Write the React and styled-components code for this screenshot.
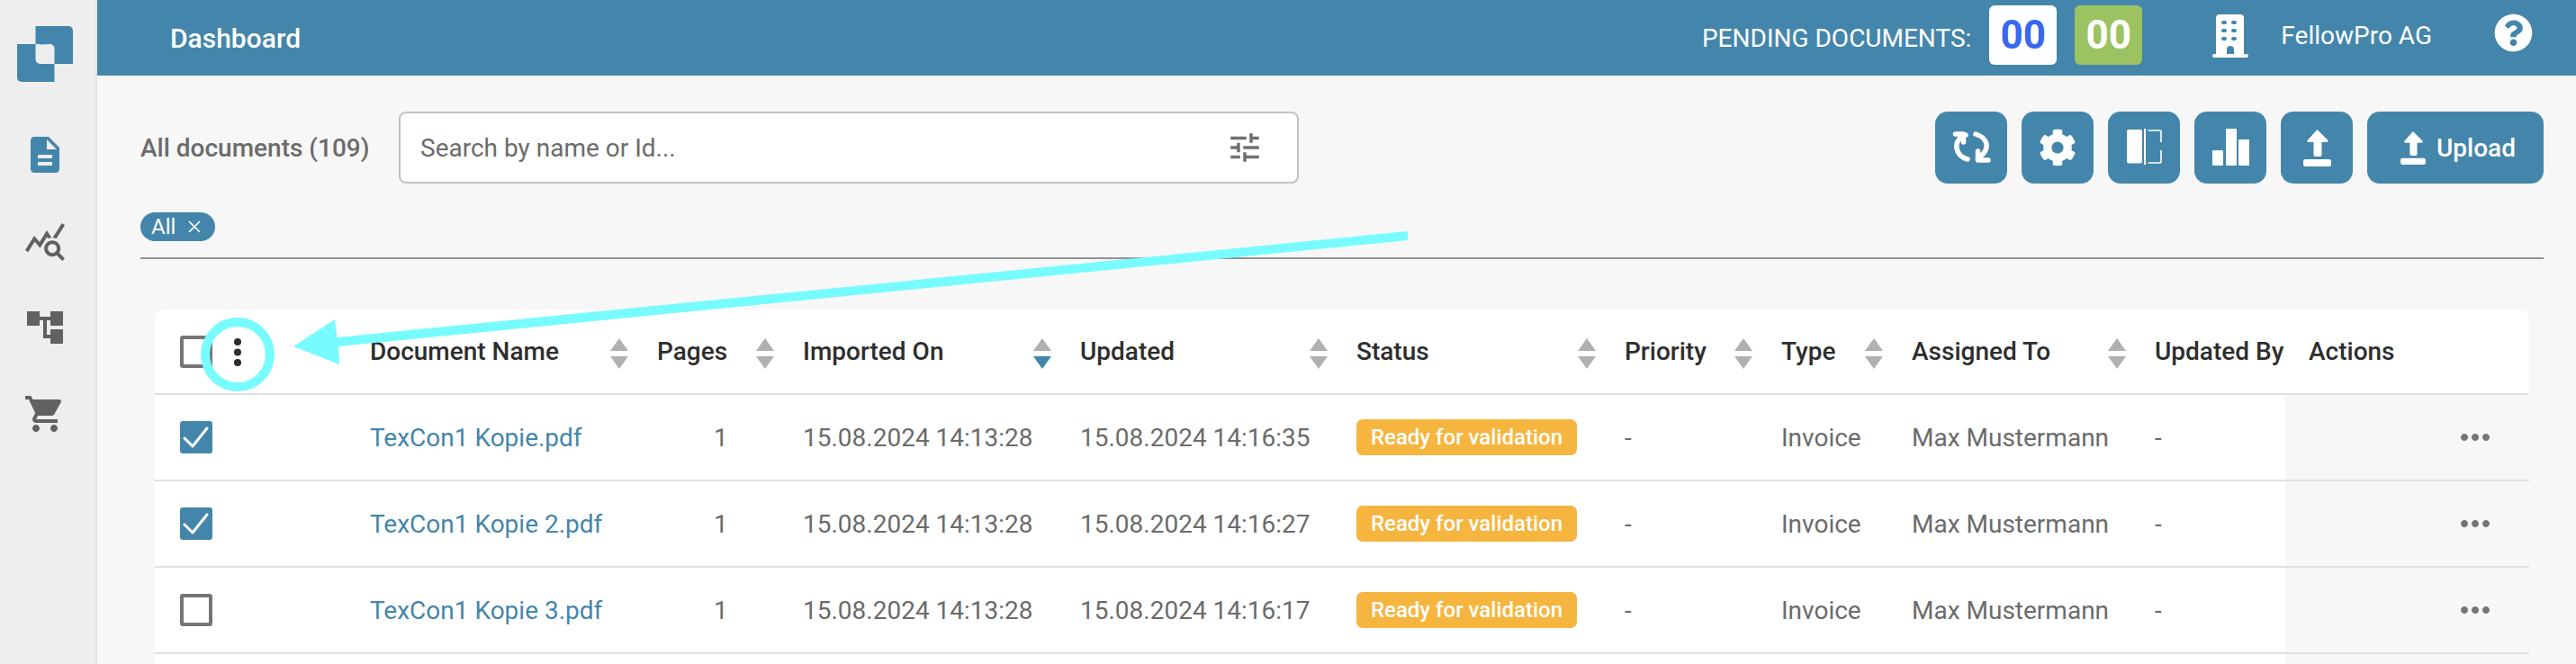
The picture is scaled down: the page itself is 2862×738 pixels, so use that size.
import styled, { createGlobalStyle } from 'styled-components';
import { FaCog, FaQuestionCircle } from 'react-icons/fa';
import { MdAccountTree, MdDescription, MdMoreHoriz, MdQueryStats, MdShoppingCart, MdTune } from 'react-icons/md';

const BLUE = '#4486ab';

const GlobalStyle = createGlobalStyle`
    html, body {
        margin: 0;
        height: 738px;
        overflow: hidden;
        background: #f7f7f7;
        font-family: Roboto, "Liberation Sans", sans-serif;
    }
    * {
        box-sizing: border-box;
    }
`;

const Page = styled.div`
    position: relative;
    display: flex;
    width: 2862px;
    height: 738px;
    overflow: hidden;
`;

const Sidebar = styled.aside`
    display: flex;
    flex-direction: column;
    align-items: center;
    flex: 0 0 108px;
    padding: 29px 6px 0 0;
    background: #eeeeee;
    border-right: 2px solid #e2e2e2;
`;

const SideNav = styled.nav`
    display: flex;
    flex-direction: column;
    gap: 48px;
    margin-top: 57px;
`;

const SideItem = styled.div`
    display: flex;
    width: 48px;
    height: 48px;
    font-size: ${(p) => p.$size || 48}px;
    align-items: center;
    justify-content: center;
    color: ${(p) => (p.$active ? BLUE : '#616161')};
`;

const Main = styled.main`
    flex: 1;
    min-width: 0;
    display: flex;
    flex-direction: column;
`;

const Header = styled.header`
    display: flex;
    flex: 0 0 84px;
    align-items: center;
    padding: 0 48px 0 81px;
    background: ${BLUE};
    color: #ffffff;
`;

const HeaderTitle = styled.div`
    font-size: 30px;
    font-weight: 500;
    margin-right: auto;
`;

const PendingLabel = styled.span`
    font-size: 28px;
    margin-right: 20px;
`;

const CountBox = styled.div`
    display: flex;
    width: 75px;
    height: 66px;
    margin-right: 20px;
    margin-top: -6px;
    align-items: center;
    justify-content: center;
    border-radius: 6px;
    font-size: 44px;
    font-weight: 700;
    background: ${(p) => p.$bg};
    color: ${(p) => p.$color};
`;

const Company = styled.span`
    font-size: 28px;
    margin: -6px 69px 0 36px;
`;

const BuildingIcon = styled.svg`
    margin-left: 58px;
    width: 40px;
    height: 48px;
    margin-top: -4px;
`;

const HelpIcon = styled(FaQuestionCircle)`
    font-size: 43px;
    margin-top: -12px;
`;

const Content = styled.div`
    display: flex;
    flex-direction: column;
    padding: 40px 36px 0 48px;
`;

const Toolbar = styled.div`
    display: flex;
    align-items: center;
`;

const DocCount = styled.div`
    width: 287px;
    font-size: 28px;
    font-weight: 500;
    color: #6b6b6b;
`;

const SearchBox = styled.div`
    display: flex;
    width: 1000px;
    height: 80px;
    padding: 0 37px 0 22px;
    align-items: center;
    justify-content: space-between;
    background: #ffffff;
    border: 2px solid #c2c2c2;
    border-radius: 8px;
    font-size: 28px;
    color: #6b6b6b;
`;

const TuneIcon = styled(MdTune)`
    font-size: 42px;
    color: #6f6f6f;
`;

const Actions = styled.div`
    display: flex;
    gap: 16px;
    margin-left: auto;
`;

const ActionButton = styled.button`
    display: flex;
    height: 80px;
    width: ${(p) => (p.$wide ? '196px' : '80px')};
    padding: ${(p) => (p.$wide ? '0 0 0 37px' : '0')};
    gap: 12px;
    align-items: center;
    justify-content: ${(p) => (p.$wide ? 'flex-start' : 'center')};
    border: none;
    border-radius: 14px;
    background: ${BLUE};
    color: #ffffff;
    font-family: inherit;
    font-size: 28px;
    font-weight: 500;
`;

const ChipRow = styled.div`
    display: flex;
    margin-top: 32px;
    padding-bottom: 18px;
    border-bottom: 2px solid #929292;
`;

const Chip = styled.div`
    display: flex;
    width: 83px;
    height: 32px;
    padding-left: 12px;
    gap: 14px;
    align-items: center;
    border-radius: 16px;
    background: ${BLUE};
    color: #ffffff;
    font-size: 24px;
`;

const Card = styled.div`
    margin: 56px 16px 0;
    background: #ffffff;
    border-radius: 12px 12px 0 0;
`;

const Row = styled.div`
    display: grid;
    grid-template-columns: 239px 319px 162px 308px 307px 298px 174px 145px 270px 145px 271px;
    height: ${(p) => (p.$head ? '95px' : '96px')};
    border-bottom: 2px solid #e0e0e0;
`;

const Cell = styled.div`
    display: flex;
    align-items: center;
    font-size: 28px;
    white-space: nowrap;
    color: #6b6b6b;
`;

const HeadCell = styled(Cell)`
    justify-content: space-between;
    padding-right: 32px;
    font-weight: 500;
    color: #2e2e2e;
`;

const SelectCell = styled(Cell)`
    padding-left: 28px;
`;

const Checkbox = styled.div`
    display: flex;
    width: 36px;
    height: 36px;
    align-items: center;
    justify-content: center;
    border-radius: 3px;
    border: ${(p) => (p.$checked ? 'none' : '4px solid #757575')};
    background: ${(p) => (p.$checked ? BLUE : '#ffffff')};
`;

const NameLink = styled.a`
    color: ${BLUE};
`;

const PagesCell = styled(Cell)`
    padding-left: 63px;
`;

const Badge = styled.span`
    display: flex;
    width: 245px;
    height: 40px;
    align-items: center;
    justify-content: center;
    border-radius: 7px;
    background: #f5b53f;
    color: #ffffff;
    font-size: 24px;
    font-weight: 500;
`;

const ActionsHead = styled(HeadCell)`
    padding-left: 26px;
`;

const ActionsCell = styled(Cell)`
    justify-content: flex-end;
    padding-right: 36px;
    background: #f7f7f7;
    font-size: 48px;
    color: #757575;
`;

const SortIcon = styled.svg`
    flex: none;
    width: 20px;
    height: 34px;
    margin-top: 4px;
`;

const Annotation = styled.svg`
    position: absolute;
    left: 0;
    top: 0;
    width: 2862px;
    height: 738px;
    pointer-events: none;
`;

const columns = [
    ['Document Name', true],
    ['Pages', true],
    ['Imported On', true, true],
    ['Updated', true],
    ['Status', true],
    ['Priority', true],
    ['Type', true],
    ['Assigned To', true],
    ['Updated By', false],
];

const documents = [
    { name: 'TexCon1 Kopie.pdf', updated: '15.08.2024 14:16:35', checked: true },
    { name: 'TexCon1 Kopie 2.pdf', updated: '15.08.2024 14:16:27', checked: true },
    { name: 'TexCon1 Kopie 3.pdf', updated: '15.08.2024 14:16:17', checked: false },
];

function Logo() {
    return (
        <svg width="62" height="62" viewBox="0 0 62 62">
            <path
                fill={BLUE}
                fillRule="evenodd"
                d="M20.5 0H57a5 5 0 0 1 5 5V42H41.5V62H5a5 5 0 0 1-5-5V20H20.5ZM25 20.5a4.5 4.5 0 0 0-4.5 0V37a5 5 0 0 0 5 5H41.5V25a5 5 0 0 0-5-5Z"
            />
        </svg>
    );
}

function SortArrows({ active }) {
    return (
        <SortIcon viewBox="0 0 20 34">
            <path d="M10 0 20 14H0Z" fill="#b0b0b0" />
            <path d="M10 34 20 20H0Z" fill={active ? BLUE : '#b0b0b0'} />
        </SortIcon>
    );
}

function UploadIcon({ small }) {
    return (
        <svg width={small ? 28 : 31} height={small ? 37 : 41} viewBox="25 19 31 41" fill="#fff">
            <path d="M40.5 19 52 30.5a1.4 1.4 0 0 1-1 2.5H45.5V47a2 2 0 0 1-2 2H38.5a2 2 0 0 1-2-2V33H31a1.4 1.4 0 0 1-1-2.5Z" />
            <rect x="25" y="52" width="31" height="8" rx="2.5" />
        </svg>
    );
}

function SyncIcon() {
    return (
        <svg width="80" height="80" viewBox="0 0 80 80" fill="none" stroke="#fff" strokeWidth="5.5" strokeLinecap="round" strokeLinejoin="round">
            <path d="M22.5 25H31.5V34" />
            <path d="M34 26C25 29 23 36 24 41C25 47 29 51 36 53" />
            <path d="M59 54H47.5V44" />
            <path d="M45 25C54 28 58 34 57 40C56 44 54 47 50 50" />
        </svg>
    );
}

function PanelIcon() {
    return (
        <svg width="80" height="80" viewBox="0 0 80 80">
            <rect x="21" y="20" width="17" height="37.5" rx="2" fill="#fff" />
            <rect x="40" y="19" width="2" height="40" fill="#fff" />
            <path d="M44.5 21H58a1 1 0 0 1 1 1V34M59 43V56a1 1 0 0 1-1 1H44.5" fill="none" stroke="#fff" strokeWidth="1.6" />
        </svg>
    );
}

function BarsIcon() {
    return (
        <svg width="80" height="80" viewBox="0 0 80 80" fill="#fff">
            <rect x="20" y="43" width="12" height="17" rx="1" />
            <rect x="35" y="19" width="12" height="41" rx="1" />
            <rect x="49" y="31" width="12" height="29" rx="1" />
        </svg>
    );
}

function CheckMark() {
    return (
        <svg width="36" height="36" viewBox="0 0 36 36" fill="none" stroke="#fff" strokeWidth="3" strokeLinecap="round" strokeLinejoin="round">
            <path d="M5 19 14 28 30 8" />
        </svg>
    );
}

export default function App() {
    return (
        <Page>
            <GlobalStyle />
            <Sidebar>
                <Logo />
                <SideNav>
                    <SideItem $active><MdDescription /></SideItem>
                    <SideItem $size={52}><MdQueryStats /></SideItem>
                    <SideItem><MdAccountTree /></SideItem>
                    <SideItem><MdShoppingCart /></SideItem>
                </SideNav>
            </Sidebar>

            <Main>
                <Header>
                    <HeaderTitle>Dashboard</HeaderTitle>
                    <PendingLabel>PENDING DOCUMENTS:</PendingLabel>
                    <CountBox $bg="#ffffff" $color="#3768f0">00</CountBox>
                    <CountBox $bg="#9cc261" $color="#ffffff">00</CountBox>
                    <BuildingIcon viewBox="0 0 40 48">
                        <path
                            fill="#fff"
                            fillRule="evenodd"
                            d="M8 0H31a4 4 0 0 1 4 4V44H38a2 2 0 0 1 0 4H2a2 2 0 0 1 0-4H4V4A4 4 0 0 1 8 0ZM12 7a2 2 0 0 0 0 4h2a2 2 0 0 0 0-4ZM23 7a2 2 0 0 0 0 4h2a2 2 0 0 0 0-4ZM12 16a2 2 0 0 0 0 4h2a2 2 0 0 0 0-4ZM23 16a2 2 0 0 0 0 4h2a2 2 0 0 0 0-4ZM12 25a2 2 0 0 0 0 4h2a2 2 0 0 0 0-4ZM23 25a2 2 0 0 0 0 4h2a2 2 0 0 0 0-4ZM20 35a4 4 0 0 0-4 4V44H24V39A4 4 0 0 0 20 35Z"
                        />
                    </BuildingIcon>
                    <Company>FellowPro AG</Company>
                    <HelpIcon />
                </Header>

                <Content>
                    <Toolbar>
                        <DocCount>All documents (109)</DocCount>
                        <SearchBox>
                            Search by name or Id...
                            <TuneIcon />
                        </SearchBox>
                        <Actions>
                            <ActionButton><SyncIcon /></ActionButton>
                            <ActionButton><FaCog size={42} /></ActionButton>
                            <ActionButton><PanelIcon /></ActionButton>
                            <ActionButton><BarsIcon /></ActionButton>
                            <ActionButton><UploadIcon /></ActionButton>
                            <ActionButton $wide><UploadIcon small />Upload</ActionButton>
                        </Actions>
                    </Toolbar>

                    <ChipRow>
                        <Chip>
                            All
                            <svg width="14" height="14" viewBox="0 0 14 14" stroke="#fff" strokeWidth="1.6">
                                <path d="M1 1 13 13M13 1 1 13" />
                            </svg>
                        </Chip>
                    </ChipRow>

                    <Card>
                        <Row $head>
                            <SelectCell><Checkbox /></SelectCell>
                            {columns.map(([label, sortable, active]) => (
                                <HeadCell key={label}>
                                    {label}
                                    {sortable && <SortArrows active={active} />}
                                </HeadCell>
                            ))}
                            <ActionsHead>Actions</ActionsHead>
                        </Row>
                        {documents.map((doc) => (
                            <Row key={doc.name}>
                                <SelectCell>
                                    <Checkbox $checked={doc.checked}>{doc.checked && <CheckMark />}</Checkbox>
                                </SelectCell>
                                <Cell><NameLink>{doc.name}</NameLink></Cell>
                                <PagesCell>1</PagesCell>
                                <Cell>15.08.2024 14:13:28</Cell>
                                <Cell>{doc.updated}</Cell>
                                <Cell><Badge>Ready for validation</Badge></Cell>
                                <Cell>-</Cell>
                                <Cell>Invoice</Cell>
                                <Cell>Max Mustermann</Cell>
                                <Cell>-</Cell>
                                <ActionsCell><MdMoreHoriz /></ActionsCell>
                            </Row>
                        ))}
                        <Row>
                            <Cell /><Cell /><Cell /><Cell /><Cell /><Cell /><Cell /><Cell /><Cell /><Cell />
                            <ActionsCell />
                        </Row>
                    </Card>
                </Content>
            </Main>

            <Annotation viewBox="0 0 2862 738">
                <circle cx="264" cy="394" r="36" fill="#ffffff" fillOpacity="0" stroke="#78fbff" strokeWidth="10" />
                <circle cx="264" cy="380" r="4" fill="#2e2e2e" />
                <circle cx="264" cy="391.5" r="4" fill="#2e2e2e" />
                <circle cx="264" cy="403" r="4" fill="#2e2e2e" />
                <path fill="#78fbff" d="M326 385 372 355 374.5 375 1564 257V267L376 385 377 405Z" />
            </Annotation>
        </Page>
    );
}
